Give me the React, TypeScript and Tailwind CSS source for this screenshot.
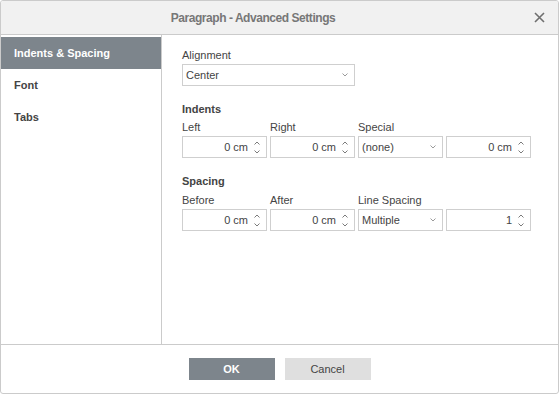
import React from 'react';

const Spin: React.FC = () => (
  <div className="flex flex-col items-center justify-center gap-[5px] w-[14px] mr-[2px]">
    <svg width="6" height="4" viewBox="0 0 6 4" className="block">
      <path d="M0.5 3.5 L3 1 L5.5 3.5" fill="none" stroke="#7a7a7a" strokeWidth="1" />
    </svg>
    <svg width="6" height="4" viewBox="0 0 6 4" className="block">
      <path d="M0.5 0.5 L3 3 L5.5 0.5" fill="none" stroke="#7a7a7a" strokeWidth="1" />
    </svg>
  </div>
);

const Caret: React.FC = () => (
  <svg width="6" height="4" viewBox="0 0 6 4" className="block">
    <path d="M0.5 0.5 L3 3 L5.5 0.5" fill="none" stroke="#9a9a9a" strokeWidth="1" />
  </svg>
);

const NumInput: React.FC<{ value: string }> = ({ value }) => (
  <div className="w-[85px] h-[22px] border border-[#cfcfcf] flex items-center justify-end bg-white">
    <span className="text-[11px] text-[#444] pr-[2px]">{value}</span>
    <Spin />
  </div>
);

const Select: React.FC<{ value: string; width: string }> = ({ value, width }) => (
  <div className={`${width} h-[22px] border border-[#cfcfcf] flex items-center justify-between pl-[3px] pr-[6px] bg-white`}>
    <span className="text-[11px] text-[#444]">{value}</span>
    <Caret />
  </div>
);

const Field: React.FC<{ label: string; children: React.ReactNode }> = ({ label, children }) => (
  <div className="flex flex-col w-[85px]">
    <div className="h-[16px] leading-[16px] text-[11px] text-[#444] mb-[1px]">{label}</div>
    {children}
  </div>
);

const App: React.FC = () => {
  const tabs = ['Indents & Spacing', 'Font', 'Tabs'];
  const active = 0;

  return (
    <div className="w-[559px] h-[394px] bg-white" style={{ fontFamily: '"Liberation Sans", Arial, sans-serif' }}>
      <div className="w-full h-full border border-[#cbcbcb] rounded-[3px] flex flex-col overflow-hidden">
        <div className="h-[34px] shrink-0 bg-[#f1f1f1] border-b border-[#cbcbcb] flex items-center relative">
          <div className="w-full text-center pr-[53px] text-[12px] font-bold tracking-[-0.45px] text-[#777]">
            Paragraph - Advanced Settings
          </div>
          <svg width="11" height="11" viewBox="0 0 11 11" className="absolute right-[13px] top-[11px]">
            <path d="M1 1 L10 10 M10 1 L1 10" stroke="#6f6f6f" strokeWidth="1.6" />
          </svg>
        </div>

        <div className="flex-1 flex min-h-0">
          <div className="w-[161px] shrink-0 border-r border-[#cbcbcb] pt-[2px]">
            {tabs.map((t, i) => (
              <div
                key={t}
                className={
                  i === active
                    ? 'h-[32px] flex items-center pl-[13px] bg-[#7d858c] text-white text-[11px] font-bold'
                    : 'h-[32px] flex items-center pl-[13px] text-[#444] text-[11px] font-bold'
                }
              >
                {t}
              </div>
            ))}
          </div>

          <div className="flex-1 pl-[20px] pt-[12px]">
            <div className="h-[16px] leading-[16px] text-[11px] text-[#444] mb-[1px]">Alignment</div>
            <Select value="Center" width="w-[173px]" />

            <div className="mt-[15px] h-[16px] leading-[16px] text-[11px] font-bold text-[#444]">Indents</div>
            <div className="mt-[2px] flex gap-[3px]">
              <Field label="Left"><NumInput value="0 cm" /></Field>
              <Field label="Right"><NumInput value="0 cm" /></Field>
              <Field label="Special"><Select value="(none)" width="w-[85px]" /></Field>
              <Field label=""><NumInput value="0 cm" /></Field>
            </div>

            <div className="mt-[15px] h-[16px] leading-[16px] text-[11px] font-bold text-[#444]">Spacing</div>
            <div className="mt-[3px] flex gap-[3px]">
              <Field label="Before"><NumInput value="0 cm" /></Field>
              <Field label="After"><NumInput value="0 cm" /></Field>
              <Field label="Line Spacing"><Select value="Multiple" width="w-[85px]" /></Field>
              <Field label=""><NumInput value="1" /></Field>
            </div>
          </div>
        </div>

        <div className="h-[49px] shrink-0 border-t border-[#cbcbcb] flex items-center justify-center gap-[10px]">
          <button className="w-[86px] h-[22px] bg-[#7d858c] text-white text-[11px] font-bold">OK</button>
          <button className="w-[86px] h-[22px] bg-[#dfdfdf] text-[#444] text-[11px]">Cancel</button>
        </div>
      </div>
    </div>
  );
};

export default App;
